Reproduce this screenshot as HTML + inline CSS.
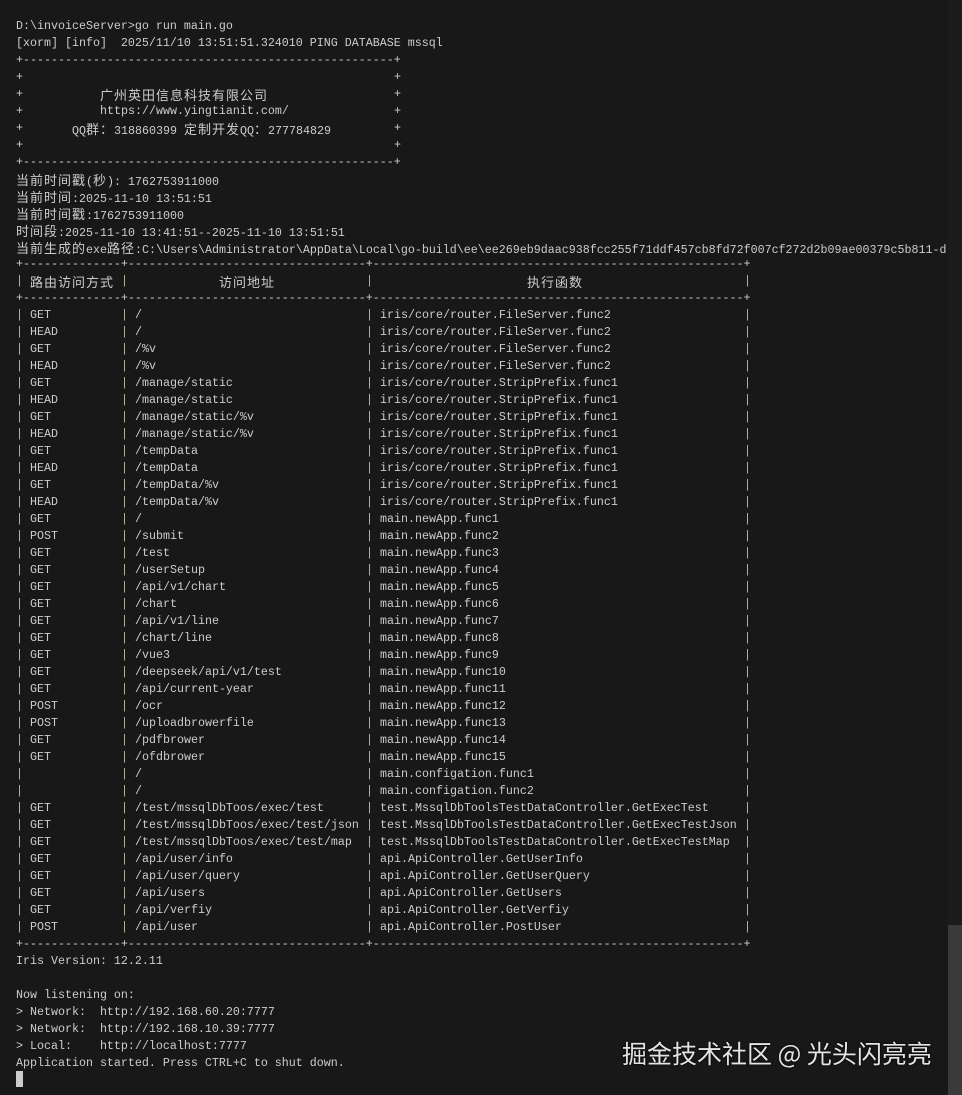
<!DOCTYPE html>
<html><head><meta charset="utf-8"><style>
html,body{margin:0;padding:0;background:#181818;width:962px;height:1095px;overflow:hidden;}
body{position:relative;font-family:"Liberation Mono",monospace;font-size:11.67px;color:#cccccc;}
#w{position:absolute;left:0;top:2px;width:962px;height:1095px;}
.l{position:absolute;left:16px;height:17px;line-height:17px;white-space:pre;}
.c{font-family:"Noto Sans CJK SC",sans-serif;font-size:13px;letter-spacing:1px;}
.r{position:absolute;left:0;width:962px;height:17px;line-height:17px;white-space:pre;}
.r>span{position:absolute;top:0;}
.p{color:#bdb69c;}
.p0{left:16px}.p1{left:121px}.p2{left:366px}.p3{left:744px}
.m{left:30px}.u{left:135px}.f{left:380px}
.b0{left:16px}.b1{left:394px}
#wm{position:absolute;left:622px;top:1035px;font-family:"Noto Sans CJK SC",sans-serif;font-size:25px;color:#e4e4e4;white-space:nowrap;text-shadow:0 0 2px #000;}
#sb{position:absolute;left:948px;top:0;width:14px;height:1095px;background:#1c1c1c;}
#th{position:absolute;left:948px;top:925px;width:14px;height:170px;background:#3a3a3a;}
#cur{position:absolute;left:16px;top:1071px;width:7px;height:16px;background:#cccccc;}
</style></head><body>
<div id="sb"></div><div id="th"></div>
<div id="w">
<div class="l" style="top:16px">D:\invoiceServer&gt;go run main.go</div>
<div class="l" style="top:33px">[xorm] [info]  2025/11/10 13:51:51.324010 PING DATABASE mssql</div>
<div class="l" style="top:50px">+-----------------------------------------------------+</div>
<div class="r" style="top:67px"><span class="b0">+</span><span class="b1">+</span></div>
<div class="r" style="top:84px"><span class="b0">+</span><span style="left:100px" class="c">广州英田信息科技有限公司</span><span class="b1">+</span></div>
<div class="r" style="top:101px"><span class="b0">+</span><span style="left:100px">https://www.yingtianit.com/</span><span class="b1">+</span></div>
<div class="r" style="top:118px"><span class="b0">+</span><span style="left:72px">QQ<span class="c">群：</span>318860399 <span class="c">定制开发</span>QQ<span class="c">：</span>277784829</span><span class="b1">+</span></div>
<div class="r" style="top:135px"><span class="b0">+</span><span class="b1">+</span></div>
<div class="l" style="top:152px">+-----------------------------------------------------+</div>
<div class="l" style="top:169px"><span class="c">当前时间戳</span>(<span class="c">秒</span>): 1762753911000</div>
<div class="l" style="top:186px"><span class="c">当前时间</span>:2025-11-10 13:51:51</div>
<div class="l" style="top:203px"><span class="c">当前时间戳</span>:1762753911000</div>
<div class="l" style="top:220px"><span class="c">时间段</span>:2025-11-10 13:41:51--2025-11-10 13:51:51</div>
<div class="l" style="top:237px"><span class="c">当前生成的</span>exe<span class="c">路径</span>:C:\Users\Administrator\AppData\Local\go-build\ee\ee269eb9daac938fcc255f71ddf457cb8fd72f007cf272d2b09ae00379c5b811-d</div>
<div class="l" style="top:254px">+--------------+----------------------------------+-----------------------------------------------------+</div>
<div class="r" style="top:271px"><span class="p p0">|</span><span class="m c">路由访问方式</span><span class="p p1">|</span><span class="c" style="left:219px">访问地址</span><span class="p p2">|</span><span class="c" style="left:527px">执行函数</span><span class="p p3">|</span></div>
<div class="l" style="top:288px">+--------------+----------------------------------+-----------------------------------------------------+</div>
<div class="r" style="top:305px"><span class="p p0">|</span><span class="m">GET</span><span class="p p1">|</span><span class="u">/</span><span class="p p2">|</span><span class="f">iris/core/router.FileServer.func2</span><span class="p p3">|</span></div>
<div class="r" style="top:322px"><span class="p p0">|</span><span class="m">HEAD</span><span class="p p1">|</span><span class="u">/</span><span class="p p2">|</span><span class="f">iris/core/router.FileServer.func2</span><span class="p p3">|</span></div>
<div class="r" style="top:339px"><span class="p p0">|</span><span class="m">GET</span><span class="p p1">|</span><span class="u">/%v</span><span class="p p2">|</span><span class="f">iris/core/router.FileServer.func2</span><span class="p p3">|</span></div>
<div class="r" style="top:356px"><span class="p p0">|</span><span class="m">HEAD</span><span class="p p1">|</span><span class="u">/%v</span><span class="p p2">|</span><span class="f">iris/core/router.FileServer.func2</span><span class="p p3">|</span></div>
<div class="r" style="top:373px"><span class="p p0">|</span><span class="m">GET</span><span class="p p1">|</span><span class="u">/manage/static</span><span class="p p2">|</span><span class="f">iris/core/router.StripPrefix.func1</span><span class="p p3">|</span></div>
<div class="r" style="top:390px"><span class="p p0">|</span><span class="m">HEAD</span><span class="p p1">|</span><span class="u">/manage/static</span><span class="p p2">|</span><span class="f">iris/core/router.StripPrefix.func1</span><span class="p p3">|</span></div>
<div class="r" style="top:407px"><span class="p p0">|</span><span class="m">GET</span><span class="p p1">|</span><span class="u">/manage/static/%v</span><span class="p p2">|</span><span class="f">iris/core/router.StripPrefix.func1</span><span class="p p3">|</span></div>
<div class="r" style="top:424px"><span class="p p0">|</span><span class="m">HEAD</span><span class="p p1">|</span><span class="u">/manage/static/%v</span><span class="p p2">|</span><span class="f">iris/core/router.StripPrefix.func1</span><span class="p p3">|</span></div>
<div class="r" style="top:441px"><span class="p p0">|</span><span class="m">GET</span><span class="p p1">|</span><span class="u">/tempData</span><span class="p p2">|</span><span class="f">iris/core/router.StripPrefix.func1</span><span class="p p3">|</span></div>
<div class="r" style="top:458px"><span class="p p0">|</span><span class="m">HEAD</span><span class="p p1">|</span><span class="u">/tempData</span><span class="p p2">|</span><span class="f">iris/core/router.StripPrefix.func1</span><span class="p p3">|</span></div>
<div class="r" style="top:475px"><span class="p p0">|</span><span class="m">GET</span><span class="p p1">|</span><span class="u">/tempData/%v</span><span class="p p2">|</span><span class="f">iris/core/router.StripPrefix.func1</span><span class="p p3">|</span></div>
<div class="r" style="top:492px"><span class="p p0">|</span><span class="m">HEAD</span><span class="p p1">|</span><span class="u">/tempData/%v</span><span class="p p2">|</span><span class="f">iris/core/router.StripPrefix.func1</span><span class="p p3">|</span></div>
<div class="r" style="top:509px"><span class="p p0">|</span><span class="m">GET</span><span class="p p1">|</span><span class="u">/</span><span class="p p2">|</span><span class="f">main.newApp.func1</span><span class="p p3">|</span></div>
<div class="r" style="top:526px"><span class="p p0">|</span><span class="m">POST</span><span class="p p1">|</span><span class="u">/submit</span><span class="p p2">|</span><span class="f">main.newApp.func2</span><span class="p p3">|</span></div>
<div class="r" style="top:543px"><span class="p p0">|</span><span class="m">GET</span><span class="p p1">|</span><span class="u">/test</span><span class="p p2">|</span><span class="f">main.newApp.func3</span><span class="p p3">|</span></div>
<div class="r" style="top:560px"><span class="p p0">|</span><span class="m">GET</span><span class="p p1">|</span><span class="u">/userSetup</span><span class="p p2">|</span><span class="f">main.newApp.func4</span><span class="p p3">|</span></div>
<div class="r" style="top:577px"><span class="p p0">|</span><span class="m">GET</span><span class="p p1">|</span><span class="u">/api/v1/chart</span><span class="p p2">|</span><span class="f">main.newApp.func5</span><span class="p p3">|</span></div>
<div class="r" style="top:594px"><span class="p p0">|</span><span class="m">GET</span><span class="p p1">|</span><span class="u">/chart</span><span class="p p2">|</span><span class="f">main.newApp.func6</span><span class="p p3">|</span></div>
<div class="r" style="top:611px"><span class="p p0">|</span><span class="m">GET</span><span class="p p1">|</span><span class="u">/api/v1/line</span><span class="p p2">|</span><span class="f">main.newApp.func7</span><span class="p p3">|</span></div>
<div class="r" style="top:628px"><span class="p p0">|</span><span class="m">GET</span><span class="p p1">|</span><span class="u">/chart/line</span><span class="p p2">|</span><span class="f">main.newApp.func8</span><span class="p p3">|</span></div>
<div class="r" style="top:645px"><span class="p p0">|</span><span class="m">GET</span><span class="p p1">|</span><span class="u">/vue3</span><span class="p p2">|</span><span class="f">main.newApp.func9</span><span class="p p3">|</span></div>
<div class="r" style="top:662px"><span class="p p0">|</span><span class="m">GET</span><span class="p p1">|</span><span class="u">/deepseek/api/v1/test</span><span class="p p2">|</span><span class="f">main.newApp.func10</span><span class="p p3">|</span></div>
<div class="r" style="top:679px"><span class="p p0">|</span><span class="m">GET</span><span class="p p1">|</span><span class="u">/api/current-year</span><span class="p p2">|</span><span class="f">main.newApp.func11</span><span class="p p3">|</span></div>
<div class="r" style="top:696px"><span class="p p0">|</span><span class="m">POST</span><span class="p p1">|</span><span class="u">/ocr</span><span class="p p2">|</span><span class="f">main.newApp.func12</span><span class="p p3">|</span></div>
<div class="r" style="top:713px"><span class="p p0">|</span><span class="m">POST</span><span class="p p1">|</span><span class="u">/uploadbrowerfile</span><span class="p p2">|</span><span class="f">main.newApp.func13</span><span class="p p3">|</span></div>
<div class="r" style="top:730px"><span class="p p0">|</span><span class="m">GET</span><span class="p p1">|</span><span class="u">/pdfbrower</span><span class="p p2">|</span><span class="f">main.newApp.func14</span><span class="p p3">|</span></div>
<div class="r" style="top:747px"><span class="p p0">|</span><span class="m">GET</span><span class="p p1">|</span><span class="u">/ofdbrower</span><span class="p p2">|</span><span class="f">main.newApp.func15</span><span class="p p3">|</span></div>
<div class="r" style="top:764px"><span class="p p0">|</span><span class="p p1">|</span><span class="u">/</span><span class="p p2">|</span><span class="f">main.configation.func1</span><span class="p p3">|</span></div>
<div class="r" style="top:781px"><span class="p p0">|</span><span class="p p1">|</span><span class="u">/</span><span class="p p2">|</span><span class="f">main.configation.func2</span><span class="p p3">|</span></div>
<div class="r" style="top:798px"><span class="p p0">|</span><span class="m">GET</span><span class="p p1">|</span><span class="u">/test/mssqlDbToos/exec/test</span><span class="p p2">|</span><span class="f">test.MssqlDbToolsTestDataController.GetExecTest</span><span class="p p3">|</span></div>
<div class="r" style="top:815px"><span class="p p0">|</span><span class="m">GET</span><span class="p p1">|</span><span class="u">/test/mssqlDbToos/exec/test/json</span><span class="p p2">|</span><span class="f">test.MssqlDbToolsTestDataController.GetExecTestJson</span><span class="p p3">|</span></div>
<div class="r" style="top:832px"><span class="p p0">|</span><span class="m">GET</span><span class="p p1">|</span><span class="u">/test/mssqlDbToos/exec/test/map</span><span class="p p2">|</span><span class="f">test.MssqlDbToolsTestDataController.GetExecTestMap</span><span class="p p3">|</span></div>
<div class="r" style="top:849px"><span class="p p0">|</span><span class="m">GET</span><span class="p p1">|</span><span class="u">/api/user/info</span><span class="p p2">|</span><span class="f">api.ApiController.GetUserInfo</span><span class="p p3">|</span></div>
<div class="r" style="top:866px"><span class="p p0">|</span><span class="m">GET</span><span class="p p1">|</span><span class="u">/api/user/query</span><span class="p p2">|</span><span class="f">api.ApiController.GetUserQuery</span><span class="p p3">|</span></div>
<div class="r" style="top:883px"><span class="p p0">|</span><span class="m">GET</span><span class="p p1">|</span><span class="u">/api/users</span><span class="p p2">|</span><span class="f">api.ApiController.GetUsers</span><span class="p p3">|</span></div>
<div class="r" style="top:900px"><span class="p p0">|</span><span class="m">GET</span><span class="p p1">|</span><span class="u">/api/verfiy</span><span class="p p2">|</span><span class="f">api.ApiController.GetVerfiy</span><span class="p p3">|</span></div>
<div class="r" style="top:917px"><span class="p p0">|</span><span class="m">POST</span><span class="p p1">|</span><span class="u">/api/user</span><span class="p p2">|</span><span class="f">api.ApiController.PostUser</span><span class="p p3">|</span></div>
<div class="l" style="top:934px">+--------------+----------------------------------+-----------------------------------------------------+</div>
<div class="l" style="top:951px">Iris Version: 12.2.11</div>
<div class="l" style="top:985px">Now listening on:</div>
<div class="l" style="top:1002px">&gt; Network:  http://192.168.60.20:7777</div>
<div class="l" style="top:1019px">&gt; Network:  http://192.168.10.39:7777</div>
<div class="l" style="top:1036px">&gt; Local:    http://localhost:7777</div>
<div class="l" style="top:1053px">Application started. Press CTRL+C to shut down.</div>
</div>
<div id="cur"></div>
<div id="wm">掘金技术社区 @ 光头闪亮亮</div>
</body></html>
